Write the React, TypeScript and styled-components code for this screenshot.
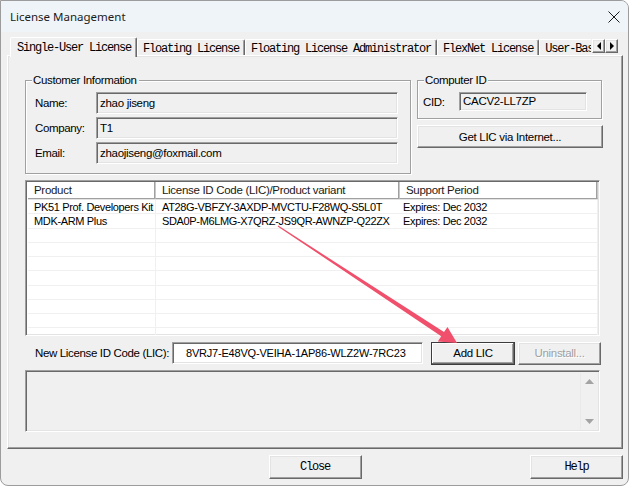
import React from "react";
import styled, { createGlobalStyle, css } from "styled-components";

const GlobalStyle = createGlobalStyle`
  html, body { margin: 0; padding: 0; background: #fff; }
  body { font-family: "Liberation Sans", Arial, sans-serif; color: #000; }
  * { box-sizing: border-box; }
`;

const raised = css`
  border: 1px solid;
  border-color: #fff #696969 #696969 #fff;
  box-shadow: inset -1px -1px 0 #a0a0a0, inset 1px 1px 0 #e3e3e3;
`;

const sunken = css`
  border: 1px solid;
  border-color: #a0a0a0 #fff #fff #a0a0a0;
  box-shadow: inset 1px 1px 0 #696969, inset -1px -1px 0 #e3e3e3;
`;

const monoText = css`
  font-family: "Liberation Mono", "Courier New", monospace;
  font-size: 12px;
  letter-spacing: -1.2px;
`;

const Window = styled.div`
  position: relative;
  width: 629px;
  height: 486px;
  border: 1px solid #9c9c9c;
  border-radius: 0 8px 8px 8px;
  background: #f0f0f0;
  overflow: hidden;
  display: flex;
  flex-direction: column;
`;

const TitleBar = styled.div`
  flex: none;
  height: 31px;
  background: #eff4f9;
  display: flex;
  align-items: center;
  justify-content: space-between;
  padding: 0 9px 0 9px;
  font-family: "Segoe UI", "Noto Sans", sans-serif;
  font-size: 11.5px;
  color: #1b1b1b;
`;

const CloseGlyph = styled.svg`
  width: 12px;
  height: 12px;
  margin-right: -1px;
`;

const Body = styled.div`
  flex: 1;
  padding: 5px 5px 0 6px;
  display: flex;
  flex-direction: column;
`;

const TabStrip = styled.div`
  position: relative;
  z-index: 1;
  height: 18px;
  display: flex;
  align-items: flex-end;
  padding: 0 5px 0 3px;
`;

const TabRow = styled.div`
  flex: 1;
  display: flex;
  align-items: flex-end;
  overflow: hidden;
  height: 20px;
  margin-bottom: -2px;
  margin-right: 1px;
`;

const Tab = styled.div<{ $active?: boolean }>`
  flex: none;
  ${monoText};
  height: ${(p) => (p.$active ? "20px" : "16px")};
  margin-bottom: ${(p) => (p.$active ? "0" : "2px")};
  padding: ${(p) => (p.$active ? "3px 5px 0 6px" : "2px 5px 0 5px")};
  white-space: nowrap;
  background: #f0f0f0;
  border-top: 1px solid #fff;
  border-left: 1px solid #fff;
  border-right: 1px solid #696969;
  box-shadow: inset -1px 0 0 #a0a0a0;
  border-radius: 2px 2px 0 0;
`;

const ScrollArrows = styled.div`
  flex: none;
  display: flex;
  height: 14px;
  margin-bottom: 2px;
`;

const ArrowButton = styled.div`
  ${raised};
  width: 13px;
  height: 14px;
  display: flex;
  align-items: center;
  justify-content: center;
  background: #f0f0f0;
`;

const TabPanel = styled.div`
  height: 394px;
  ${raised};
  padding: 24px 0 0 17px;
  display: flex;
  flex-direction: column;
`;

const TopRow = styled.div`
  display: flex;
  gap: 6px;
`;

const GroupBox = styled.div<{ $w: number; $h: number }>`
  position: relative;
  width: ${(p) => p.$w}px;
  height: ${(p) => p.$h}px;
  border: 1px solid #a0a0a0;
  box-shadow: inset 1px 1px 0 #fff, 1px 1px 0 #fff;
`;

const Legend = styled.span`
  position: absolute;
  top: -8px;
  left: 6px;
  padding: 0 2px 0 1px;
  background: #f0f0f0;
  font-size: 11.5px;
  letter-spacing: -0.35px;
  line-height: 14px;
`;

const FieldGrid = styled.div<{ $cols: string; $pad: string; $row: number }>`
  display: grid;
  grid-template-columns: ${(p) => p.$cols};
  grid-auto-rows: ${(p) => p.$row}px;
  row-gap: 3px;
  align-items: center;
  padding: ${(p) => p.$pad};
`;

const Label = styled.span`
  font-size: 11.5px;
  letter-spacing: -0.35px;
`;

const ReadField = styled.div`
  ${sunken};
  height: 100%;
  display: flex;
  align-items: center;
  padding: 0 3px 1px 3px;
  background: #f0f0f0;
  font-size: 11.5px;
  letter-spacing: -0.3px;
`;

const RightColumn = styled.div`
  display: flex;
  flex-direction: column;
  gap: 6px;
`;

const Button = styled.div<{ $w: number; $h?: number; $default?: boolean; $disabled?: boolean; $mono?: boolean }>`
  width: ${(p) => p.$w}px;
  height: ${(p) => p.$h ?? 23}px;
  display: flex;
  align-items: center;
  justify-content: center;
  background: #f0f0f0;
  font-size: 11.5px;
  letter-spacing: -0.3px;
  ${raised};
  ${(p) =>
    p.$default &&
    css`
      border: 1px solid #3c3c3c;
      box-shadow: inset -1px -1px 0 #696969, inset 1px 1px 0 #fff, inset -2px -2px 0 #a0a0a0;
    `}
  ${(p) =>
    p.$disabled &&
    css`
      color: #a0a0a0;
      text-shadow: 1px 1px 0 #fff;
    `}
  ${(p) => p.$mono && monoText};
`;

const ListView = styled.div`
  margin-top: 6px;
  width: 575px;
  height: 156px;
  ${sunken};
  background: #fff;
  overflow: hidden;
  padding: 1px 2px 0 2px;
`;

const ListGrid = styled.div`
  display: grid;
  grid-template-columns: 128px 244px 198px;
`;

const HeaderCell = styled.div`
  height: 17px;
  display: flex;
  align-items: center;
  padding: 0 0 1px 6px;
  font-size: 11.5px;
  letter-spacing: -0.3px;
  color: #1a1a1a;
  background: #fff;
  border-bottom: 1px solid #a0a0a0;
  border-right: 1px solid #c8c8c8;
  box-shadow: inset -1px 0 0 #a0a0a0, 0 1px 0 #e3e3e3;
  &:last-child { border-right: none; box-shadow: 0 1px 0 #e3e3e3; }
`;

const Cell = styled.div`
  height: 14.25px;
  display: flex;
  align-items: center;
  padding: 0 0 0 6px;
  font-size: 11px;
  letter-spacing: -0.35px;
  white-space: nowrap;
  overflow: hidden;
  border-right: 1px solid #f0f0f0;
  border-bottom: 1px solid #f0f0f0;
  &:nth-child(3n + 1) { padding-left: 3px; }
  &:nth-child(3n) { border-right: none; }
`;

const FirstRowSpacer = styled.div`
  grid-column: 1 / -1;
  height: 1px;
`;

const LicRow = styled.div`
  margin-top: 6px;
  display: flex;
  align-items: center;
  height: 22px;
`;

const LicLabel = styled.span`
  width: 147px;
  padding-left: 10px;
  font-size: 11.5px;
  letter-spacing: -0.35px;
`;

const LicInput = styled.div`
  ${sunken};
  width: 251px;
  height: 22px;
  background: #fff;
  display: flex;
  align-items: center;
  padding: 0 0 1px 13px;
  font-size: 11px;
  letter-spacing: -0.2px;
  white-space: nowrap;
`;

const ButtonGap = styled.div<{ $w: number }>`
  width: ${(p) => p.$w}px;
`;

const MessageBox = styled.div`
  margin-top: 6px;
  width: 575px;
  height: 62px;
  ${sunken};
  display: flex;
  justify-content: flex-end;
  padding: 2px 2px 2px 0;
`;

const ScrollBar = styled.div`
  width: 17px;
  display: flex;
  flex-direction: column;
  justify-content: space-between;
  align-items: center;
  padding: 6px 0 5px 0;
  border-left: 1px solid #e9e9e9;
`;

const Footer = styled.div`
  margin-top: 6px;
  display: grid;
  grid-template-columns: 1fr auto 1fr;
`;

const HelpSlot = styled.div`
  justify-self: end;
`;

const Overlay = styled.svg`
  position: absolute;
  top: -1px;
  left: -1px;
  pointer-events: none;
`;

const rows = [
  ["PK51 Prof. Developers Kit", "AT28G-VBFZY-3AXDP-MVCTU-F28WQ-S5L0T", "Expires: Dec 2032"],
  ["MDK-ARM Plus", "SDA0P-M6LMG-X7QRZ-JS9QR-AWNZP-Q22ZX", "Expires: Dec 2032"],
  ["", "", ""],
  ["", "", ""],
  ["", "", ""],
  ["", "", ""],
  ["", "", ""],
  ["", "", ""],
  ["", "", ""],
  ["", "", ""],
];

const Triangle = ({ dir, color }: { dir: "up" | "down" | "left" | "right"; color: string }) => {
  const pts = {
    up: "0,5 4.5,0 9,5",
    down: "0,0 4.5,5 9,0",
    left: "4,0 4,8 0,4",
    right: "0,0 0,8 4,4",
  }[dir];
  const vertical = dir === "up" || dir === "down";
  return (
    <svg width={vertical ? 9 : 4} height={vertical ? 5 : 8}>
      <polygon points={pts} fill={color} />
    </svg>
  );
};

const App = () => {
  return (
    <>
      <GlobalStyle />
      <Window>
        <TitleBar>
          <span>License Management</span>
          <CloseGlyph viewBox="0 0 12 12">
            <path d="M0.5 0.5 L11.5 11.5 M11.5 0.5 L0.5 11.5" stroke="#1b1b1b" strokeWidth="1" fill="none" />
          </CloseGlyph>
        </TitleBar>
        <Body>
          <TabStrip>
            <TabRow>
              <Tab $active>Single-User License</Tab>
              <Tab>Floating License</Tab>
              <Tab>Floating License Administrator</Tab>
              <Tab>FlexNet License</Tab>
              <Tab>User-Based License</Tab>
            </TabRow>
            <ScrollArrows>
              <ArrowButton><Triangle dir="left" color="#000" /></ArrowButton>
              <ArrowButton><Triangle dir="right" color="#000" /></ArrowButton>
            </ScrollArrows>
          </TabStrip>
          <TabPanel>
            <TopRow>
              <GroupBox $w={386} $h={94}>
                <Legend>Customer Information</Legend>
                <FieldGrid $cols="61px 302px" $pad="11px 0 0 9px" $row={22}>
                  <Label>Name:</Label>
                  <ReadField>zhao jiseng</ReadField>
                  <Label>Company:</Label>
                  <ReadField>T1</ReadField>
                  <Label>Email:</Label>
                  <ReadField>zhaojiseng@foxmail.com</ReadField>
                </FieldGrid>
              </GroupBox>
              <RightColumn>
                <GroupBox $w={185} $h={39}>
                  <Legend>Computer ID</Legend>
                  <FieldGrid $cols="36px 128px" $pad="11px 0 0 5px" $row={19}>
                    <Label>CID:</Label>
                    <ReadField>CACV2-LL7ZP</ReadField>
                  </FieldGrid>
                </GroupBox>
                <Button $w={186}>Get LIC via Internet...</Button>
              </RightColumn>
            </TopRow>

            <ListView>
              <ListGrid>
                <HeaderCell>Product</HeaderCell>
                <HeaderCell>License ID Code (LIC)/Product variant</HeaderCell>
                <HeaderCell>Support Period</HeaderCell>
                <FirstRowSpacer />
                {rows.map((r, i) =>
                  r.map((c, j) => <Cell key={`${i}-${j}`}>{c}</Cell>)
                )}
              </ListGrid>
            </ListView>

            <LicRow>
              <LicLabel>New License ID Code (LIC):</LicLabel>
              <LicInput>8VRJ7-E48VQ-VEIHA-1AP86-WLZ2W-7RC23</LicInput>
              <ButtonGap $w={8} />
              <Button $w={84} $default>Add LIC</Button>
              <ButtonGap $w={3} />
              <Button $w={83} $disabled>Uninstall...</Button>
            </LicRow>

            <MessageBox>
              <ScrollBar>
                <Triangle dir="up" color="#a3a3a3" />
                <Triangle dir="down" color="#a3a3a3" />
              </ScrollBar>
            </MessageBox>
          </TabPanel>

          <Footer>
            <span />
            <Button $w={93} $h={24} $mono>Close</Button>
            <HelpSlot>
              <Button $w={93} $h={24} $mono>Help</Button>
            </HelpSlot>
          </Footer>
        </Body>

        <Overlay width={629} height={486} viewBox="0 0 629 486">
          <polygon
            points="278.3,225.6 444.0,332.1 447.5,327.0 457,343 437.8,341.4 441.2,336.3 277.7,226.4"
            fill="#f0506b"
          />
        </Overlay>
      </Window>
    </>
  );
};

export default App;
